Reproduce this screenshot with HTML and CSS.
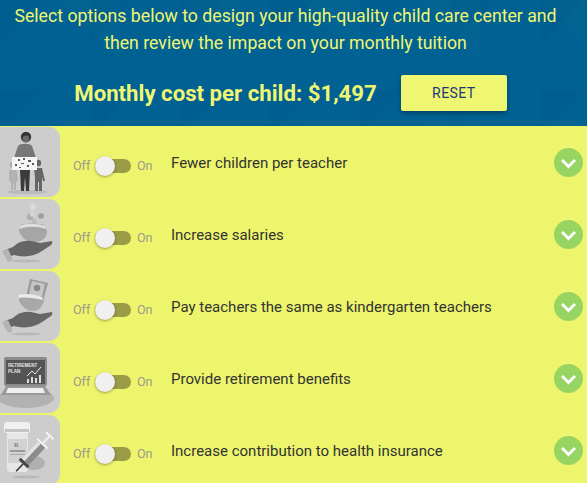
FILE: index.html
```html
<!DOCTYPE html>
<html lang="en">
<head>
  <meta charset="UTF-8">
  <title>Design your child care center</title>
  <link rel="stylesheet" href="styles.css">
</head>
<body>
  <header class="top">
    <p class="intro">Select options below to design your high-quality child care center and<br>then review the impact on your monthly tuition</p>
    <div class="cost-row">
      <span class="cost">Monthly cost per child: $1,497</span>
      <button class="reset">RESET</button>
    </div>
  </header>

  <div class="options">
    <div class="option">
      <div class="thumb">
        <svg viewBox="0 0 60 70" width="60" height="70">
          <ellipse cx="27" cy="65" rx="20" ry="2" fill="#bababa"/>
          <path d="M20 43h10l-1 21h-3l-1-14-1 14h-3z" fill="#3a3a3a"/>
          <path d="M15 28l3-9c2-3 12-3 14 0l3 9 1 4H14z" fill="#777"/>
          <circle cx="26" cy="10" r="5.200" fill="#333"/>
          <circle cx="26" cy="12" r="3.400" fill="#6a6a6a"/>
          <circle cx="13" cy="38" r="3.200" fill="#aaa"/>
          <path d="M9 44c1-2 7-2 8 0l1 10-2 1v8h-2v-7h-1v7h-2v-8l-2-1z" fill="#b2b2b2"/>
          <circle cx="38" cy="36" r="3.200" fill="#666"/>
          <path d="M34 41h8l3 13-2 0-1-4v14h-3v-9h-1v9h-3V50z" fill="#666"/>
          <rect x="12" y="30" width="25" height="13" fill="#f6f6f6"/>
          <g fill="#5a5a5a">
            <rect x="18" y="32" width="2" height="2"/><rect x="23" y="31" width="2" height="2"/>
            <rect x="28" y="33" width="3" height="2"/><rect x="15" y="37" width="2" height="2"/>
            <rect x="21" y="36" width="3" height="1"/><rect x="27" y="38" width="2" height="2"/>
            <rect x="32" y="36" width="2" height="2"/><rect x="19" y="40" width="2" height="1"/>
          </g>
        </svg>
      </div>
      <div class="toggle"><span>Off</span><i class="track"><b class="knob"></b></i><span>On</span></div>
      <div class="label">Fewer children per teacher</div>
      <div class="more"><svg viewBox="0 0 29 29" width="29" height="29"><path d="M8 12l6.500 6.500L21 12" fill="none" stroke="#fff" stroke-width="2.800"/></svg></div>
    </div>

    <div class="option">
      <div class="thumb">
        <svg viewBox="0 0 60 70" width="60" height="70">
          <ellipse cx="26" cy="62" rx="15" ry="1.500" fill="#b8b8b8"/>
          <circle cx="33" cy="8" r="2.800" fill="#ddd"/>
          <circle cx="30" cy="18" r="3.200" fill="#b0b0b0"/>
          <circle cx="41" cy="17" r="2.800" fill="#9c9c9c"/>
          <circle cx="34" cy="22" r="2.500" fill="#bbb"/>
          <path d="M31 11l4 2-2 5-3-1z" fill="#d6d6d6"/>
          <path d="M20 26c8-2 18-2 24 0l3 6c0 6-4 11-13 11-8 0-13-5-15-11z" fill="#a6a6a6"/>
          <path d="M19 27c8-3 18-3 26 0l1 3c-8-3-19-3-26 0z" fill="#dedede"/>
          <path d="M5 51l8-3c5-5 11-7 18-6l9 2 12-2c1 3-1 4-4 6-6 4-11 8-19 9-6 1-11 0-15-1l-6 2z" fill="#666"/>
          <path d="M2 52l6-2 5 11-5 2z" fill="#b4b4b4"/>
        </svg>
      </div>
      <div class="toggle"><span>Off</span><i class="track"><b class="knob"></b></i><span>On</span></div>
      <div class="label">Increase salaries</div>
      <div class="more"><svg viewBox="0 0 29 29" width="29" height="29"><path d="M8 12l6.500 6.500L21 12" fill="none" stroke="#fff" stroke-width="2.800"/></svg></div>
    </div>

    <div class="option">
      <div class="thumb">
        <svg viewBox="0 0 60 70" width="60" height="70">
          <ellipse cx="26" cy="63" rx="15" ry="1.500" fill="#b8b8b8"/>
          <path d="M30 8l18 4-5 18-17-4z" fill="#9a9a9a"/>
          <path d="M32 10l13 3-3 13-13-3z" fill="#c6c6c6"/>
          <circle cx="37" cy="17" r="3.200" fill="#8a8a8a"/>
          <path d="M19 26l24-1 1 5c-2 6-5 10-11 10-7 0-11-5-14-10z" fill="#a8a8a8"/>
          <path d="M18 24c7-2 16-1 24 2l1 3c-8-2-17-3-24-2z" fill="#ebebeb"/>
          <path d="M5 50l8-3c5-5 11-7 18-6l9 2 12-2c1 3-1 4-4 6-6 4-11 8-19 9-6 1-11 0-15-1l-6 2z" fill="#666"/>
          <path d="M2 51l6-2 5 11-5 2z" fill="#b4b4b4"/>
        </svg>
      </div>
      <div class="toggle"><span>Off</span><i class="track"><b class="knob"></b></i><span>On</span></div>
      <div class="label">Pay teachers the same as kindergarten teachers</div>
      <div class="more"><svg viewBox="0 0 29 29" width="29" height="29"><path d="M8 12l6.500 6.500L21 12" fill="none" stroke="#fff" stroke-width="2.800"/></svg></div>
    </div>

    <div class="option">
      <div class="thumb">
        <svg viewBox="0 0 60 70" width="60" height="70">
          <ellipse cx="26" cy="55" rx="28" ry="10" fill="#b2b2b2"/>
          <rect x="4" y="14" width="43" height="29" rx="2" fill="#8a8a8a"/>
          <rect x="6" y="17" width="39" height="24" fill="#555"/>
          <text x="8" y="23.500" class="plan">RETIREMENT</text>
          <text x="8" y="30" class="plan">PLAN</text>
          <path d="M27 33l5-5 3 3 6-7" fill="none" stroke="#eee" stroke-width="1"/>
          <g fill="#ddd"><rect x="27" y="36" width="2" height="4"/><rect x="31" y="34" width="2" height="6"/><rect x="35" y="35" width="2" height="5"/><rect x="39" y="32" width="2" height="8"/></g>
          <path d="M6 43h39l6 9H1z" fill="#9a9a9a"/>
          <path d="M8 45h35l2 5H6z" fill="#eee"/>
        </svg>
      </div>
      <div class="toggle"><span>Off</span><i class="track"><b class="knob"></b></i><span>On</span></div>
      <div class="label">Provide retirement benefits</div>
      <div class="more"><svg viewBox="0 0 29 29" width="29" height="29"><path d="M8 12l6.500 6.500L21 12" fill="none" stroke="#fff" stroke-width="2.800"/></svg></div>
    </div>

    <div class="option">
      <div class="thumb">
        <svg viewBox="0 0 60 70" width="60" height="70">
          <ellipse cx="34" cy="48" rx="11" ry="7" fill="#b0b0b0"/>
          <ellipse cx="26" cy="62" rx="14" ry="1.500" fill="#b8b8b8"/>
          <rect x="7" y="17" width="21" height="40" rx="3" fill="#e6e6e6"/>
          <rect x="4" y="7" width="26" height="11" rx="3" fill="#f0f0f0"/>
          <path d="M5 14h24v3H5z" fill="#c4c4c4"/>
          <rect x="8" y="24" width="19" height="24" fill="#d2d2d2"/>
          <text x="14" y="32" class="rx">R</text>
          <rect x="10" y="35" width="15" height="2" fill="#999"/>
          <rect x="10" y="39" width="15" height="1" fill="#aaa"/>
          <g transform="rotate(43.500 33 38.500)">
            <rect x="28" y="26" width="10" height="24" fill="#8c8c8c"/>
            <rect x="28" y="26" width="4" height="24" fill="#e2e2e2"/>
            <rect x="26" y="24" width="14" height="2" fill="#f4f4f4"/>
            <rect x="32" y="15" width="2" height="9" fill="#eee"/>
            <rect x="28" y="13" width="10" height="2" fill="#f4f4f4"/>
            <rect x="27" y="50" width="12" height="3" fill="#444"/>
            <rect x="32.200" y="53" width="1.600" height="10" fill="#333"/>
          </g>
        </svg>
      </div>
      <div class="toggle"><span>Off</span><i class="track"><b class="knob"></b></i><span>On</span></div>
      <div class="label">Increase contribution to health insurance</div>
      <div class="more"><svg viewBox="0 0 29 29" width="29" height="29"><path d="M8 12l6.500 6.500L21 12" fill="none" stroke="#fff" stroke-width="2.800"/></svg></div>
    </div>
  </div>
</body>
</html>
```

FILE: styles.css
```css
html, body {
  height: 100%;
  overflow: hidden;
}

body {
  margin: 0;
  font-family: Roboto, "Liberation Sans", sans-serif;
  background-color: #edf56c;
}

.top {
  height: 126px;
  box-sizing: border-box;
  padding: 3px 16px 0 0;
  text-align: center;
  color: #eff672;
  background-color: #006192;
  background-image:
    linear-gradient(135deg, rgba(0, 0, 0, 0.015) 25%, transparent 25%),
    linear-gradient(225deg, rgba(255, 255, 255, 0.01) 25%, transparent 25%);
  background-size: 90px 90px, 120px 120px;
}

.intro {
  margin: 0;
  font-size: 17.700px;
  line-height: 27px;
}

.cost-row {
  display: flex;
  justify-content: center;
  align-items: center;
  gap: 24px;
  margin-top: 18px;
  padding-left: 10px;
}

.cost {
  font-size: 22.200px;
  font-weight: 700;
}

.reset {
  width: 106px;
  height: 36px;
  border: none;
  border-radius: 2px;
  background-color: #eff672;
  color: #1d3a72;
  font-family: inherit;
  font-size: 14px;
  letter-spacing: 0.4px;
  box-shadow: 0 2px 4px rgba(0, 0, 0, 0.35);
}

.options {
  padding-top: 1px;
}

.option {
  display: flex;
  align-items: center;
  height: 70px;
  margin-bottom: 2px;
}

.thumb {
  flex: none;
  width: 60px;
  height: 70px;
  background-color: #cdcdcd;
  border-radius: 0 11px 11px 0;
}

.thumb svg {
  display: block;
}

.plan {
  font-family: "Liberation Sans", sans-serif;
  font-size: 4.500px;
  font-weight: 700;
  fill: #e8e8e8;
}

.rx {
  font-family: "Liberation Serif", serif;
  font-size: 7px;
  fill: #666;
}

.toggle {
  display: flex;
  align-items: center;
  width: 91px;
  margin: 8px 0 0 13px;
  font-size: 12.500px;
  color: #9b9a8e;
}

.toggle span {
  margin-bottom: 2px;
}

.toggle span:first-child {
  width: 22px;
}

.track {
  position: relative;
  display: block;
  width: 36px;
  height: 14px;
  margin-right: 6px;
  border-radius: 7px;
  background-color: #9a9c48;
}

.knob {
  position: absolute;
  top: -3px;
  left: 0;
  width: 20px;
  height: 20px;
  border-radius: 50%;
  background-color: #f0f0f0;
  box-shadow: 0 1px 3px rgba(0, 0, 0, 0.35);
}

.label {
  flex: 1;
  margin: 2px 0 0 7px;
  font-size: 15px;
  color: #333;
}

.more {
  flex: none;
  width: 29px;
  height: 29px;
  margin: 0 4px 0 0;
  border-radius: 50%;
  background-color: #98d462;
}

.more svg {
  display: block;
}
```
